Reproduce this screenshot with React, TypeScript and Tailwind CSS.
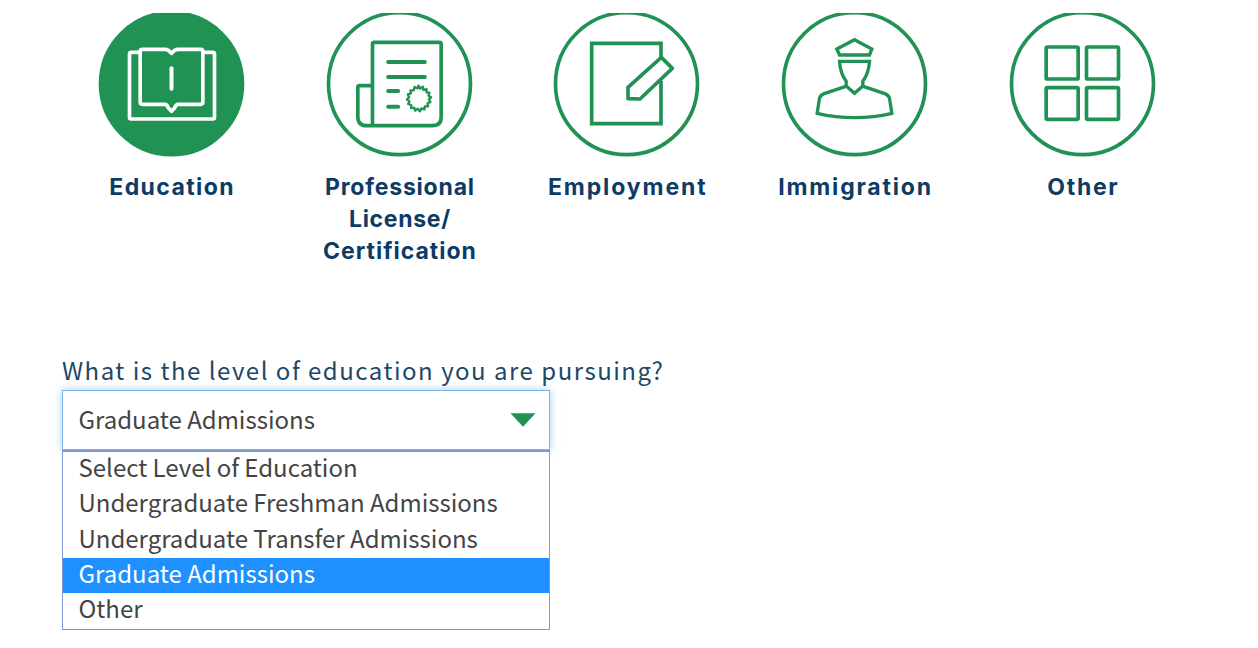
import type { ReactNode } from "react";

const GREEN = "#1f9254";

type Purpose = {
  lines: { text: string; tracking: string }[];
  viewBox: string;
  center: number;
  selected?: boolean;
  icon: ReactNode;
};

const purposes: Purpose[] = [
  {
    lines: [{ text: "Education", tracking: "tracking-[1.4px]" }],
    viewBox: "-3.5 38 495 432",
    center: 244,
    selected: true,
    icon: (
      <>
        <path d="M148 156H123Q118 156 118 161V351Q118 356 123 356H368Q373 356 373 351V161Q373 156 368 156H341" />
        <path d="M244 159Q235 147 225 147H156Q150 147 150 153V306Q150 312 156 312H224Q231 312 234 322L244 333L254 322Q257 312 264 312H332Q338 312 338 306V153Q338 147 332 147H263Q253 147 244 159Z" />
        <path d="M244 204V265" strokeWidth="12" />
      </>
    ),
  },
  {
    lines: [
      { text: "Professional", tracking: "tracking-[0.8px]" },
      { text: "License/", tracking: "tracking-[0.7px]" },
      { text: "Certification", tracking: "tracking-[1px]" },
    ],
    viewBox: "-3.5 38 495 432",
    center: 244,
    icon: (
      <>
        <path d="M163 376V131Q163 126 168 126H364Q369 126 369 131V350Q369 376 343 376H146Q119 376 119 349V261Q119 256 124 256H160" />
        <path d="M210 185H320M210 230H320M210 272H240M210 319H240" strokeWidth="12" />
        <path
          d="M302 260l5 9 8-6 2 10 9-3 0 10 9 1-3 9 8 5-7 6 5 8-9 4 2 9-10 0-1 9-9-3-5 9-6-8-8 6-3-9-9 1 0-9-9-3 4-8-8-6 7-6-4-9 9-3-1-9 10 0 2-10 9 4Z"
          transform="translate(-1 -4)"
          strokeWidth="7"
          strokeLinejoin="round"
        />
      </>
    ),
  },
  {
    lines: [{ text: "Employment", tracking: "tracking-[1.9px]" }],
    viewBox: "-5 38 495 432",
    center: 242.5,
    icon: (
      <g strokeLinejoin="miter" strokeLinecap="butt">
        <path d="M346 172V129H138V370H346V242" />
        <path d="M347 171L380 204L283 296L247 295V261Z" strokeLinejoin="round" />
      </g>
    ),
  },
  {
    lines: [{ text: "Immigration", tracking: "tracking-[1.8px]" }],
    viewBox: "-5.5 38 495 432",
    center: 242,
    icon: (
      <g strokeLinejoin="miter" strokeWidth="10">
        <path d="M242 118L294 146L287 164H197L189 146Z" />
        <path d="M197 183H287Q285 218 267 243V257L242 279L217 257V243Q199 218 197 183Z" />
        <path d="M216 258L151 280Q140 284 137 294L130 339Q185 352 242 352Q299 352 354 339L347 294Q344 284 333 280L268 258" />
      </g>
    ),
  },
  {
    lines: [{ text: "Other", tracking: "tracking-[1.7px]" }],
    viewBox: "0.5 38 495 432",
    center: 248,
    icon: (
      <>
        <rect x="139" y="140" width="96" height="96" rx="4" />
        <rect x="260" y="140" width="96" height="96" rx="4" />
        <rect x="139" y="262" width="96" height="95" rx="4" />
        <rect x="260" y="262" width="96" height="95" rx="4" />
      </>
    ),
  },
];

const options = [
  { text: "Select Level of Education" },
  { text: "Undergraduate Freshman Admissions" },
  { text: "Undergraduate Transfer Admissions" },
  { text: "Graduate Admissions", selected: true },
  { text: "Other" },
];

function PurposeCard({ purpose }: { purpose: Purpose }) {
  return (
    <button type="button" className="flex w-[227.8px] flex-col items-center">
      <svg
        width="165"
        height="144"
        viewBox={purpose.viewBox}
        fill="none"
        stroke={purpose.selected ? "#ffffff" : GREEN}
        strokeWidth="11"
        strokeLinecap="round"
        strokeLinejoin="round"
        aria-hidden="true"
      >
        <circle
          cx={purpose.center}
          cy="250"
          r="213"
          stroke={GREEN}
          strokeWidth="11"
          fill={purpose.selected ? GREEN : "none"}
        />
        {purpose.icon}
      </svg>
      <span className="mt-[14px] flex flex-col items-center pl-[1.5px] font-['Inter'] text-[23px] leading-[32px] font-bold text-[#0c3c66]">
        {purpose.lines.map((line) => (
          <span key={line.text} className={line.tracking}>
            {line.text}
          </span>
        ))}
      </span>
    </button>
  );
}

export default function App() {
  return (
    <main className="h-[648px] w-[1258px] overflow-hidden bg-white pt-[13px] font-['Noto_Sans_CJK_SC',sans-serif]">
      <div className="flex h-[341px] pl-[57.5px]">
        {purposes.map((purpose) => (
          <PurposeCard key={purpose.lines[0].text} purpose={purpose} />
        ))}
      </div>
      <div className="flex flex-col pl-[62px]">
        <label className="h-[36px] text-[24px] leading-[32px] font-normal tracking-[1.5px] whitespace-nowrap text-[#1d4767]">
          What is the level of education you are pursuing?
        </label>
        <div className="flex h-[60px] w-[488px] items-center justify-between border border-[#7db4e6] bg-white pr-[13px] pl-[15.5px] text-[24px] text-[#444] shadow-[0_0_8px_rgba(102,175,233,0.6)]">
          <span className="pb-[3px] leading-[35px]">Graduate Admissions</span>
          <svg width="26" height="14" viewBox="0 0 26 14" aria-hidden="true">
            <path d="M0.5 0.3H25.5L13 13.7Z" fill={GREEN} />
          </svg>
        </div>
        <ul className="relative flex h-[180px] w-[488px] flex-col border border-t-2 border-[#7a9bd1] bg-white">
          {options.map((option) => (
            <li
              key={option.text}
              className={`h-[35.3px] pl-[15.5px] text-[24px] leading-[29px] whitespace-nowrap ${
                option.selected ? "bg-[#1e90ff] text-white" : "text-[#444]"
              }`}
            >
              {option.text}
            </li>
          ))}
        </ul>
      </div>
    </main>
  );
}
